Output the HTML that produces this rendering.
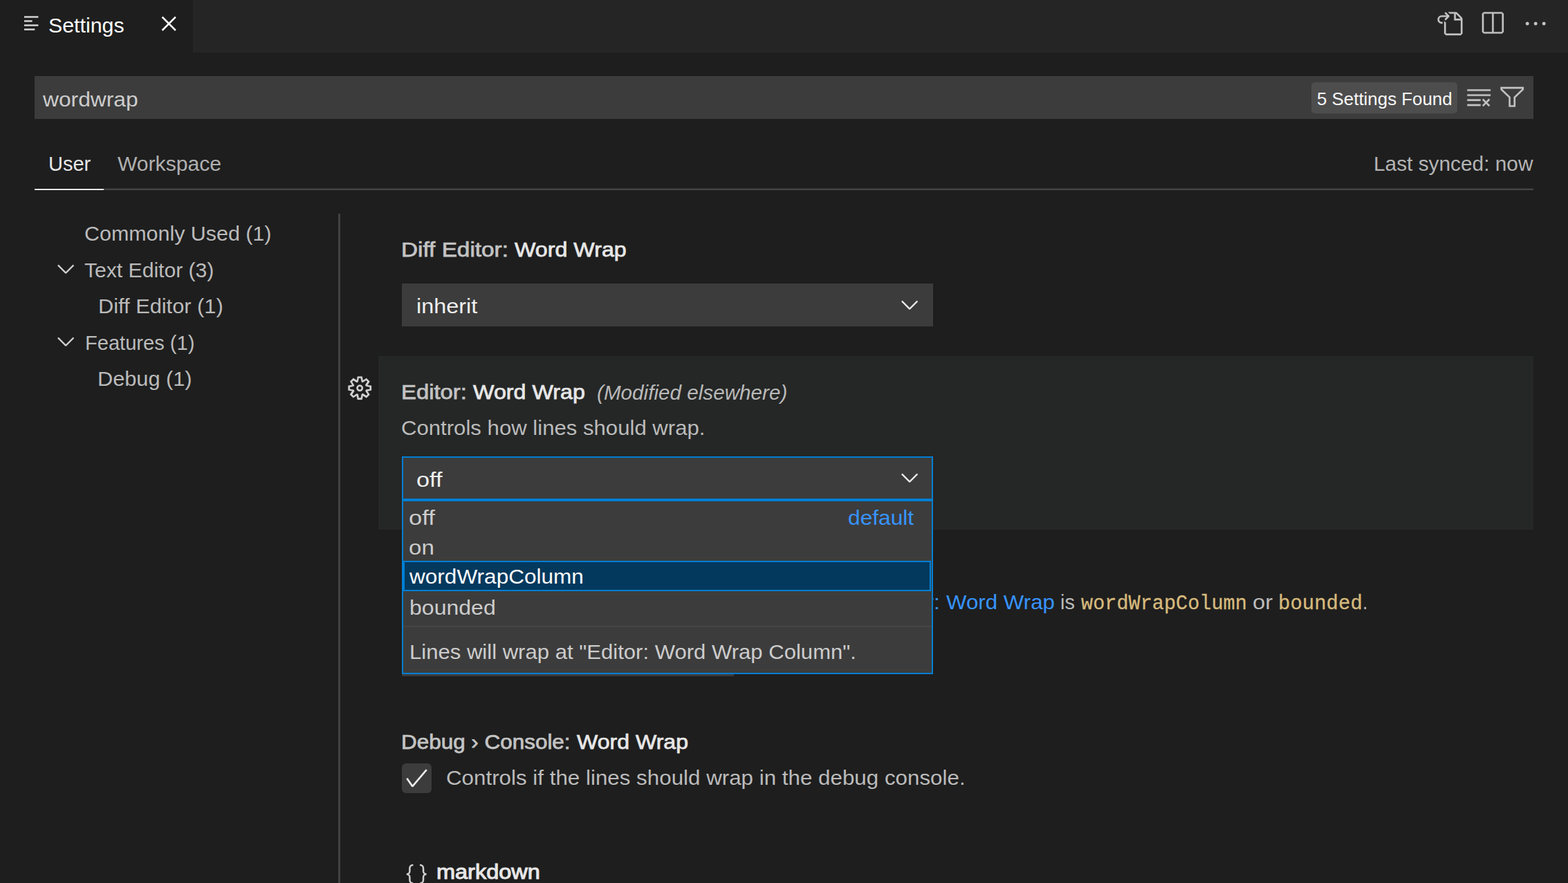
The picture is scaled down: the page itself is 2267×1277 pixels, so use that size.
<!DOCTYPE html>
<html lang="en">
<head>
<meta charset="utf-8">
<title>Settings</title>
<style>
html,body{margin:0;padding:0;background:#1e1e1e;}
body{width:2267px;height:1277px;overflow:hidden;position:relative;font-family:"Liberation Sans",sans-serif;color:#ccc;}
header,nav,main,section,ul,li,h1,h2,h3,p{display:block;margin:0;padding:0;font:inherit;list-style:none;}
.abs,.t,svg{position:absolute;}
.t{white-space:pre;line-height:44px;transform-origin:0 0;font-family:"Liberation Sans",sans-serif;}
.t.m{font-family:"Liberation Mono",monospace;}
.cat{color:#c3c3c3;}
.lab{color:#e7e7e7;}
.lnk{color:#3794ff;}
svg{overflow:visible;}
/* editor tab strip */
#tabbar{left:0;top:0;width:2267px;height:76px;background:#252526;}
#tab{left:0;top:0;width:279px;height:76px;background:#1e1e1e;}
/* search box */
#search{left:50px;top:110px;width:2167px;height:62px;background:#3c3c3c;}
#badge{left:1896px;top:119px;width:211px;height:45px;border-radius:5px;background:#4d4d4d;}
/* User / Workspace tabs */
#hline{left:50px;top:273px;width:2167px;height:2px;background:#454545;}
#hline2{left:150px;top:272px;width:2067px;height:1px;background:#2e2e2e;}
#hactive{left:50px;top:273px;width:100px;height:2px;background:#e7e7e7;}
/* table of contents / settings list splitter */
#split{left:489px;top:309px;width:3px;height:968px;background:#414141;}
/* setting rows */
#sel1{left:581px;top:410px;width:768px;height:62px;background:#3c3c3c;}
#focus{left:547px;top:515px;width:1670px;height:251px;background:#252726;}
#sel2{left:581px;top:660px;width:768px;height:63px;background:#3c3c3c;box-sizing:border-box;border:2px solid #007fd4;}
#num{left:581px;top:916px;width:480px;height:62px;background:#3c3c3c;}
#chk{left:581px;top:1104px;width:43px;height:43px;border-radius:6px;background:#3c3c3c;}
/* open select dropdown */
#dd{left:581px;top:723px;width:768px;height:252px;background:#3c3c3c;box-sizing:border-box;border:2px solid #007fd4;z-index:5;}
#ddsel{left:583px;top:811px;width:763px;height:44px;background:#04395e;box-sizing:border-box;border:2px solid #007fd4;z-index:6;}
#ddsep{left:583px;top:905px;width:764px;height:2px;background:#454545;z-index:6;}
.dd .t{z-index:7;}
</style>
</head>
<body>
<header class="tabs">
<div id="tabbar" class="abs"></div>
<div id="tab" class="abs"></div>
<span class="t" style="left:69.79px;top:15px;font-size:30.2px;transform:scaleX(1.0052);color:#fff">Settings</span>
</header>
<main>
<section class="search">
<div id="search" class="abs"></div>
<div id="badge" class="abs"></div>
<span class="t" style="left:62.0px;top:122px;font-size:30.2px;transform:scaleX(1.0515);color:#ccc">wordwrap</span>
<span class="t" style="left:1903.8px;top:121px;font-size:25.9px;transform:scaleX(0.9995);color:#f8f8f8">5 Settings Found</span>
</section>
<section class="hdr">
<div id="hline" class="abs"></div>
<div id="hline2" class="abs"></div>
<div id="hactive" class="abs"></div>
<span class="t" style="left:70.08px;top:215px;font-size:30.2px;transform:scaleX(0.9613);color:#e7e7e7">User</span>
<span class="t" style="left:169.7px;top:215px;font-size:30.2px;transform:scaleX(0.9967);color:#b0b0b0">Workspace</span>
<span class="t" style="left:1985.62px;top:215px;font-size:30.2px;transform:scaleX(0.9879);color:#b4b4b4">Last synced: now</span>
</section>
<nav class="toc">
<span class="t" style="left:121.99px;top:316px;font-size:30.2px;transform:scaleX(1.0075);color:#bbb">Commonly Used (1)</span>
<span class="t" style="left:122.2px;top:369px;font-size:30.2px;transform:scaleX(0.9973);color:#bbb">Text Editor (3)</span>
<span class="t" style="left:141.96px;top:421px;font-size:30.2px;transform:scaleX(1.019);color:#bbb">Diff Editor (1)</span>
<span class="t" style="left:122.67px;top:474px;font-size:30.2px;transform:scaleX(0.9634);color:#bbb">Features (1)</span>
<span class="t" style="left:140.77px;top:526px;font-size:30.2px;transform:scaleX(1.0173);color:#bbb">Debug (1)</span>
</nav>
<div id="split" class="abs"></div>
<section class="s1">
<div id="sel1" class="abs"></div>
<span class="t" style="left:579.99px;top:339px;font-size:29.4px;transform:scaleX(1.1338);-webkit-text-stroke:0.75px"><span class="cat">Diff Editor:</span></span>
<span class="t" style="left:744.1px;top:339px;font-size:29.4px;transform:scaleX(1.0966);-webkit-text-stroke:0.75px"><span class="lab">Word Wrap</span></span>
<span class="t" style="left:601.64px;top:421px;font-size:30.2px;transform:scaleX(1.0718);color:#f0f0f0">inherit</span>
</section>
<section class="s2">
<div id="focus" class="abs"></div>
<div id="sel2" class="abs"></div>
<span class="t" style="left:579.77px;top:545px;font-size:29.4px;transform:scaleX(1.1173);-webkit-text-stroke:0.75px"><span class="cat">Editor:</span></span>
<span class="t" style="left:683.6px;top:545px;font-size:29.4px;transform:scaleX(1.098);-webkit-text-stroke:0.75px"><span class="lab">Word Wrap</span></span>
<span class="t" style="left:863.36px;top:546px;font-size:28.6px;transform:scaleX(1.0373);font-style:italic;color:#b9b9b9">(Modified elsewhere)</span>
<span class="t" style="left:580.27px;top:597px;font-size:30.2px;transform:scaleX(1.0312);color:#bbb">Controls how lines should wrap.</span>
<span class="t" style="left:601.86px;top:672px;font-size:30.2px;transform:scaleX(1.1364);color:#f0f0f0">off</span>
</section>
<section class="s3">
<div id="num" class="abs"></div>
<span class="t" style="left:580.25px;top:849px;font-size:30.2px;transform:scaleX(1.0478);color:#bbb">Controls the wrapping column of the editor when <span class="lnk">Editor:</span></span>
<span class="t" style="left:1367.5px;top:849px;font-size:30.2px;transform:scaleX(1.036);color:#3794ff">Word Wrap</span>
<span class="t" style="left:1532.77px;top:849px;font-size:30.2px;transform:scaleX(0.9632);color:#bbb">is</span>
<span class="t m" style="left:1563.3px;top:852px;font-size:28.6px;transform:scaleX(0.9982);color:#d7ba7d;-webkit-text-stroke:0.3px">wordWrapColumn</span>
<span class="t" style="left:1810.72px;top:849px;font-size:30.2px;transform:scaleX(1.0846);color:#bbb">or</span>
<span class="t m" style="left:1848.37px;top:852px;font-size:28.6px;transform:scaleX(1.0138);color:#d7ba7d;-webkit-text-stroke:0.3px">bounded</span>
<span class="t" style="left:1969.75px;top:849px;font-size:30.2px;transform:scaleX(0.875);color:#bbb">.</span>
<span class="t" style="left:579.55px;top:797px;font-size:29.4px;transform:scaleX(1.0758);-webkit-text-stroke:0.75px"><span class="cat">Editor: </span><span class="lab">Word Wrap Column</span></span>
<span class="t" style="left:601.97px;top:925px;font-size:30.2px;transform:scaleX(1.0312);color:#f0f0f0">80</span>
</section>
<section class="dd">
<div id="dd" class="abs"></div>
<div id="ddsel" class="abs"></div>
<div id="ddsep" class="abs"></div>
<span class="t" style="left:590.58px;top:727px;font-size:30.2px;transform:scaleX(1.1455);color:#ccc">off</span>
<span class="t" style="left:1226.15px;top:727px;font-size:30.2px;transform:scaleX(1.05);color:#3794ff">default</span>
<span class="t" style="left:590.6px;top:770px;font-size:30.2px;transform:scaleX(1.0968);color:#ccc">on</span>
<span class="t" style="left:591.7px;top:812px;font-size:30.2px;transform:scaleX(1.045);color:#fff">wordWrapColumn</span>
<span class="t" style="left:591.58px;top:857px;font-size:30.2px;transform:scaleX(1.0614);color:#ccc">bounded</span>
<span class="t" style="left:592.14px;top:921px;font-size:30.2px;transform:scaleX(1.0292);color:#ccc">Lines will wrap at "Editor: Word Wrap Column".</span>
</section>
<section class="s4">
<div id="chk" class="abs"></div>
<span class="t" style="left:579.94px;top:1051px;font-size:29.4px;transform:scaleX(1.0693);-webkit-text-stroke:0.75px"><span class="cat">Debug › Console:</span></span>
<span class="t" style="left:834.19px;top:1051px;font-size:29.4px;transform:scaleX(1.0912);-webkit-text-stroke:0.75px"><span class="lab">Word Wrap</span></span>
<span class="t" style="left:644.76px;top:1103px;font-size:30.2px;transform:scaleX(1.0378);color:#bbb">Controls if the lines should wrap in the debug console.</span>
</section>
<section class="s5">
<span class="t" style="left:630.88px;top:1239px;font-size:29.0px;transform:scaleX(1.1197);-webkit-text-stroke:1.0px;color:#e7e7e7">markdown</span>
</section>
</main>
<svg class="ic ic-tab" style="left:34.5px;top:22px;" width="22" height="24" viewBox="0 0 22 24" fill="#dadada"><rect x="0" y="1.3" width="20.4" height="2.4"/><rect x="0" y="7.3" width="11.6" height="2.4"/><rect x="0" y="13.4" width="20.4" height="2.4"/><rect x="0" y="19.4" width="15.3" height="2.4"/></svg>
<svg class="ic ic-close" style="left:224.95px;top:14.8px;" width="38.4" height="38.4" viewBox="0 0 16 16" fill="#ffffff"><path fill-rule="evenodd" clip-rule="evenodd" stroke="#ffffff" stroke-width="0.1" d="M8 8.707l3.646 3.647.708-.707L8.707 8l3.647-3.646-.707-.708L8 7.293 4.354 3.646l-.707.708L7.293 8l-3.646 3.646.707.708L8 8.707z"/></svg>
<svg class="ic ic-gofile" style="left:2075.6px;top:14.6px;" width="38.4" height="38.4" viewBox="0 0 16 16" fill="#c5c5c5"><path fill-rule="evenodd" clip-rule="evenodd" stroke="#c5c5c5" stroke-width="0.1" d="M6 5.914l2.06-2.06v-.708L5.915 1l-.707.707.043.043.25.25 1 1h-3a2.5 2.5 0 0 0 0 5H4V7h-.5a1.5 1.5 0 1 1 0-3h3L5.207 5.293 5.914 6 6 5.914zM11 2H8.328l-1-1H12l.71.29 3 3L16 5v9l-1 1H6l-1-1V6.5l1 .847V14h9V6h-4V2zm1 0v3h3l-3-3z"/></svg>
<svg class="ic ic-split" style="left:2138.1px;top:14.5px;" width="38.4" height="38.4" viewBox="0 0 16 16" fill="#c5c5c5"><path fill-rule="evenodd" clip-rule="evenodd" stroke="#c5c5c5" stroke-width="0.1" d="M14 1H3L2 2v11l1 1h11l1-1V2l-1-1zM8 13H3V2h5v11zm6 0H9V2h5v11z"/></svg>
<svg class="ic ic-dots" style="left:2200.6px;top:14.8px;" width="38.4" height="38.4" viewBox="0 0 16 16" fill="#c5c5c5"><path fill-rule="evenodd" clip-rule="evenodd" stroke="#c5c5c5" stroke-width="0.1" d="M4 8a1 1 0 1 1-2 0 1 1 0 0 1 2 0zm5 0a1 1 0 1 1-2 0 1 1 0 0 1 2 0zm5 0a1 1 0 1 1-2 0 1 1 0 0 1 2 0z"/></svg>
<svg class="ic ic-clear" style="left:2118.6px;top:121.5px;" width="38.4" height="38.4" viewBox="0 0 16 16" fill="#c5c5c5"><path fill-rule="evenodd" clip-rule="evenodd" stroke="#c5c5c5" stroke-width="0.1" d="M10 12.6l.7.7 1.6-1.6 1.6 1.6.8-.7L13 11l1.7-1.6-.8-.8-1.6 1.7-1.6-1.7-.7.8 1.6 1.6-1.6 1.6zM1 4h14V3H1v1zm0 3h14V6H1v1zm8 2.5V9H1v1h8v-.5zM9 13v-1H1v1h8z"/></svg>
<svg class="ic ic-filter" style="left:2167.3px;top:121.2px;" width="38.4" height="38.4" viewBox="0 0 16 16" fill="#c5c5c5"><path fill-rule="evenodd" clip-rule="evenodd" stroke="#c5c5c5" stroke-width="0.1" d="M15 2v1.67l-5 4.759V14H6V8.429l-5-4.76V2h14zM7 8v5h2V8l5-4.76V3H2v.24L7 8z"/></svg>
<svg class="ic ic-chev" style="left:76.0px;top:368.5px;" width="38.4" height="38.4" viewBox="0 0 16 16" fill="#d4d4d4"><path fill-rule="evenodd" clip-rule="evenodd" stroke="#d4d4d4" stroke-width="0.1" d="M7.976 10.072l4.357-4.357.62.618L8.284 11h-.618L3 6.333l.619-.618 4.357 4.357z"/></svg>
<svg class="ic ic-chev" style="left:76.0px;top:473.5px;" width="38.4" height="38.4" viewBox="0 0 16 16" fill="#d4d4d4"><path fill-rule="evenodd" clip-rule="evenodd" stroke="#d4d4d4" stroke-width="0.1" d="M7.976 10.072l4.357-4.357.62.618L8.284 11h-.618L3 6.333l.619-.618 4.357 4.357z"/></svg>
<svg class="ic ic-chev" style="left:1296.0px;top:420.9px;" width="38.4" height="38.4" viewBox="0 0 16 16" fill="#f0f0f0"><path fill-rule="evenodd" clip-rule="evenodd" stroke="#f0f0f0" stroke-width="0.1" d="M7.976 10.072l4.357-4.357.62.618L8.284 11h-.618L3 6.333l.619-.618 4.357 4.357z"/></svg>
<svg class="ic ic-chev" style="left:1296.0px;top:670.9px;" width="38.4" height="38.4" viewBox="0 0 16 16" fill="#f0f0f0"><path fill-rule="evenodd" clip-rule="evenodd" stroke="#f0f0f0" stroke-width="0.1" d="M7.976 10.072l4.357-4.357.62.618L8.284 11h-.618L3 6.333l.619-.618 4.357 4.357z"/></svg>
<svg class="ic ic-gear" style="left:501.3px;top:542.2px;" width="38.4" height="38.4" viewBox="0 0 16 16" fill="#d4d4d4"><path fill-rule="evenodd" clip-rule="evenodd" stroke="#d4d4d4" stroke-width="0.1" d="M9.1 4.4L8.6 2H7.4l-.5 2.4-.7.3-2-1.3-.9.8 1.3 2-.2.7-2.4.5v1.2l2.4.5.3.8-1.3 2 .8.8 2-1.3.8.3.4 2.3h1.2l.5-2.4.8-.3 2 1.3.8-.8-1.3-2 .3-.8 2.3-.4V7.4l-2.4-.5-.3-.8 1.3-2-.8-.8-2 1.3-.7-.2zM9.4 1l.5 2.4L12 2.1l2 2-1.4 2.1 2.4.4v2.8l-2.4.5L14 12l-2 2-2.1-1.4-.5 2.4H6.6l-.5-2.4L4 13.9l-2-2 1.4-2.1L1 9.4V6.6l2.4-.5L2.1 4l2-2 2.1 1.4.4-2.4h2.8zm.6 7c0 1.1-.9 2-2 2s-2-.9-2-2 .9-2 2-2 2 .9 2 2zM8 9c.6 0 1-.4 1-1s-.4-1-1-1-1 .4-1 1 .4 1 1 1z"/></svg>
<svg class="ic ic-check" style="left:583.0px;top:1106.0px;" width="38.4" height="38.4" viewBox="0 0 16 16" fill="#f0f0f0"><path fill-rule="evenodd" clip-rule="evenodd" stroke="#f0f0f0" stroke-width="0.1" d="M14.431 3.323l-8.47 10-.79-.036-3.35-4.77.818-.574 2.978 4.24 8.051-9.506.764.646z"/></svg>
<svg class="ic ic-json" style="left:582.9px;top:1244.6px;" width="38.4" height="38.4" viewBox="0 0 16 16" fill="none" stroke="#cfcfcf" stroke-width="1.05"><path d="M6 2.5h-.2c-1.1 0-1.9.9-1.9 2v1.6c0 1-.7 1.9-1.9 1.9c1.2 0 1.9.9 1.9 1.9v1.6c0 1.1.8 2 1.9 2H6"/><path d="M10 2.5h.2c1.1 0 1.9.9 1.9 2v1.6c0 1 .7 1.9 1.9 1.9c-1.2 0-1.9.9-1.9 1.9v1.6c0 1.1-.8 2-1.9 2H10"/></svg>
</body>
</html>
